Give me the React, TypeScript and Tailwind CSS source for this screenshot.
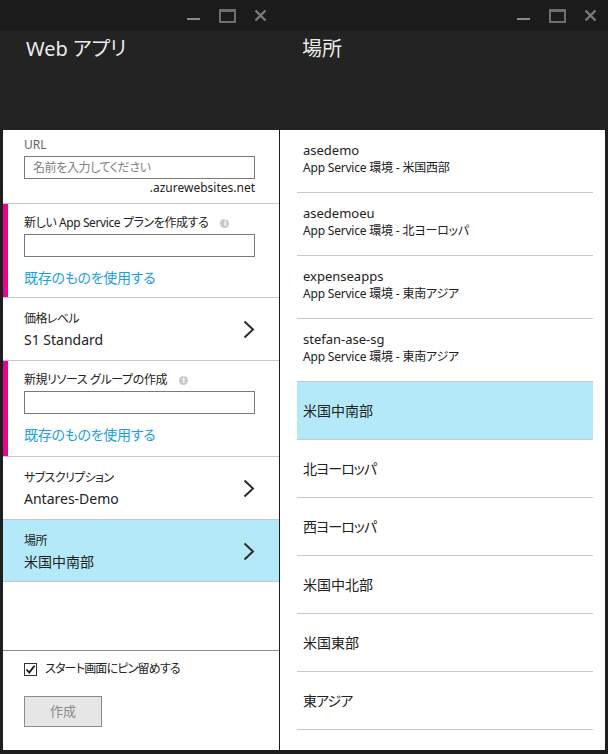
import React from "react";

const FONT = { fontFamily: '"Noto Sans", "Noto Sans CJK JP", sans-serif' };

function WinControls() {
  return (
    <div className="flex items-center h-full">
      <div className="w-[13px] h-[2px] bg-[#8a8a8a] mt-[7px]" />
      <div className="ml-[19px] w-[17px] h-[14px] border-2 border-t-[3px] border-[#6e6e6e]" />
      <svg className="ml-[18px]" width="13" height="13" viewBox="0 0 13 13">
        <path d="M1.5 1.5 L11.5 11.5 M11.5 1.5 L1.5 11.5" stroke="#7a7a7a" strokeWidth="2.4" />
      </svg>
    </div>
  );
}

function Chevron() {
  return (
    <svg width="12" height="19" viewBox="0 0 12 19" className="shrink-0">
      <path d="M1.5 1.5 L10 9.5 L1.5 17.5" stroke="#2b2b2b" strokeWidth="2" fill="none" />
    </svg>
  );
}

function Info() {
  return (
    <span className="inline-flex w-[9px] h-[9px] rounded-full bg-[#c8c8c8] items-center justify-center ml-[12px] text-white text-[8px] font-bold leading-none">
      i
    </span>
  );
}

function Divider({ dark }: { dark?: boolean }) {
  return <div className={dark ? "h-px bg-[#8c8c8c]" : "h-px bg-[#c8c8c8]"} />;
}

function Input({ placeholder }: { placeholder?: string }) {
  return (
    <div className="w-[231px] h-[23px] border border-[#7a7a7a] flex items-center pl-[8px] text-[12px] tracking-[-0.4px] text-[#808080]">
      {placeholder}
    </div>
  );
}

function NavRow({ label, value, selected, h }: { label: string; value: string; selected?: boolean; h: string }) {
  return (
    <div className={(selected ? "bg-[#b3e9f8] " : "") + h + " flex pl-[21px] pr-[24px]"}>
      <div className="flex-1 pt-[12px]">
        <div className="text-[12px] leading-[18px] tracking-[-0.6px] text-[#222]">{label}</div>
        <div className="text-[14px] leading-[24px] text-[#222]">{value}</div>
      </div>
      <div className="self-center mt-[1px]">
        <Chevron />
      </div>
    </div>
  );
}

function PinkSection({ label, h }: { label: string; h: string }) {
  return (
    <div className={"flex " + h}>
      <div className="w-[5px] bg-[#ec008c]" />
      <div className="pl-[16px] pt-[10px]">
        <div className="flex items-center text-[12px] leading-[18px] tracking-[-0.4px] text-[#222]">
          {label}
          <Info />
        </div>
        <div className="mt-[2px]">
          <Input />
        </div>
        <div className="mt-[10px] text-[14px] leading-[22px] tracking-[-0.3px] text-[#1ba1e2]">既存のものを使用する</div>
      </div>
    </div>
  );
}

function TwoLine({ name, sub }: { name: string; sub: string }) {
  return (
    <>
      <div className="h-[62px] pt-[11px] pl-[6px]">
        <div className="text-[13px] leading-[18px] text-[#222]">{name}</div>
        <div className="text-[12px] leading-[18px] tracking-[-0.2px] text-[#222]">{sub}</div>
      </div>
      <Divider />
    </>
  );
}

function OneLine({ name, selected, kana }: { name: string; selected?: boolean; kana?: boolean }) {
  return (
    <>
      <div
        className={
          (selected ? "bg-[#b3e9f8] " : "") +
          (kana ? "tracking-[-1px] " : "") +
          "h-[57px] flex items-center pl-[6px] text-[14px] text-[#222]"
        }
      >
        {name}
      </div>
      <Divider />
    </>
  );
}

export default function App() {
  return (
    <div className="w-[608px] h-[754px] bg-[#1e1e1e] flex flex-col overflow-hidden [font-feature-settings:'palt']" style={FONT}>
      <div className="h-[31px] bg-[#1b1b1b] flex">
        <div className="w-[280px] flex justify-end pr-[13px]">
          <WinControls />
        </div>
        <div className="flex-1 flex justify-end pr-[11px]">
          <WinControls />
        </div>
      </div>
      <div className="h-[99px] bg-[#232323] flex">
        <div className="w-[280px] pl-[26px] pt-[3px] text-[20px] leading-[30px] text-[#ececec]">Web アプリ</div>
        <div className="flex-1 pl-[22px] pt-[3px] text-[20px] leading-[30px] text-[#ececec]">場所</div>
      </div>
      <div className="flex-1 flex px-[3px] pb-[4px] gap-px min-h-0">
        <div className="w-[276px] bg-white flex flex-col">
          <div className="h-[73px] pl-[21px] pt-[6px]">
            <div className="text-[12px] leading-[18px] text-[#666]">URL</div>
            <div className="mt-[2px]">
              <Input placeholder="名前を入力してください" />
            </div>
            <div className="w-[231px] text-right text-[12px] leading-[16px] mt-[1px] text-[#222]">.azurewebsites.net</div>
          </div>
          <Divider />
          <PinkSection label="新しい App Service プランを作成する" h="h-[93px]" />
          <Divider />
          <NavRow label="価格レベル" value="S1 Standard" h="h-[62px]" />
          <Divider />
          <PinkSection label="新規リソース グループの作成" h="h-[95px]" />
          <Divider />
          <NavRow label="サブスクリプション" value="Antares-Demo" h="h-[62px]" />
          <Divider />
          <NavRow label="場所" value="米国中南部" selected h="h-[61px]" />
          <Divider />
          <div className="flex-1" />
          <Divider dark />
          <div className="h-[99px] pl-[21px] pt-[11px]">
            <div className="flex items-center h-[14px]">
              <div className="w-[13px] h-[13px] border border-[#333] flex items-center justify-center">
                <svg width="11" height="11" viewBox="0 0 11 11">
                  <path d="M1.5 5.5 L4.3 8.5 L9.5 1.8" stroke="#111" strokeWidth="1.8" fill="none" />
                </svg>
              </div>
              <span className="ml-[8px] text-[12px] tracking-[-0.8px] text-[#222]">スタート画面にピン留めする</span>
            </div>
            <div className="mt-[20px] w-[78px] h-[31px] bg-[#e6e6e6] border border-[#8c8c8c] flex items-center justify-center text-[13px] text-[#8a8a8a]">
              作成
            </div>
          </div>
        </div>
        <div className="flex-1 bg-white pl-[17px] pr-[12px]">
          <TwoLine name="asedemo" sub="App Service 環境 - 米国西部" />
          <TwoLine name="asedemoeu" sub="App Service 環境 - 北ヨーロッパ" />
          <TwoLine name="expenseapps" sub="App Service 環境 - 東南アジア" />
          <TwoLine name="stefan-ase-sg" sub="App Service 環境 - 東南アジア" />
          <OneLine name="米国中南部" selected />
          <OneLine name="北ヨーロッパ" kana />
          <OneLine name="西ヨーロッパ" kana />
          <OneLine name="米国中北部" />
          <OneLine name="米国東部" />
          <OneLine name="東アジア" kana />
        </div>
      </div>
    </div>
  );
}
